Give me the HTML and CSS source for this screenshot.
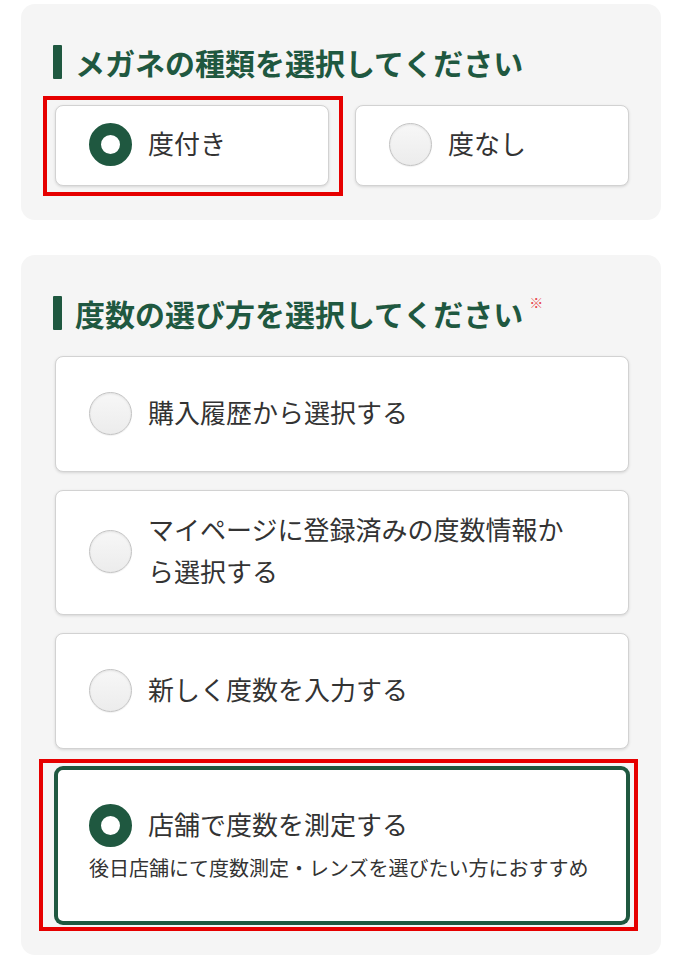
FILE: index.html
```html
<!DOCTYPE html>
<html lang="ja">
<head>
<meta charset="utf-8">
<title>メガネの種類</title>
<link rel="stylesheet" href="styles.css">
</head>
<body>
<main class="page">
  <section class="panel">
    <h2 class="panel-title">メガネの種類を選択してください</h2>
    <div class="choice-grid">
      <label class="choice is-selected is-flagged flag-a">
        <span class="radio"></span>
        <span class="choice-label">度付き</span>
      </label>
      <label class="choice">
        <span class="radio"></span>
        <span class="choice-label">度なし</span>
      </label>
    </div>
  </section>

  <section class="panel panel--list">
    <h2 class="panel-title">度数の選び方を選択してください<span class="required">※</span></h2>
    <div class="choice-list">
      <label class="choice choice--tall">
        <span class="radio"></span>
        <span class="choice-label">購入履歴から選択する</span>
      </label>
      <label class="choice choice--tall">
        <span class="radio"></span>
        <span class="choice-label">マイページに登録済みの度数情報から選択する</span>
      </label>
      <label class="choice choice--tall">
        <span class="radio"></span>
        <span class="choice-label">新しく度数を入力する</span>
      </label>
      <label class="choice choice--stacked is-selected is-active is-flagged flag-b">
        <span class="choice-row">
          <span class="radio"></span>
          <span class="choice-label">店舗で度数を測定する</span>
        </span>
        <span class="choice-note">後日店舗にて度数測定・レンズを選びたい方におすすめ</span>
      </label>
    </div>
  </section>
</main>
</body>
</html>
```
FILE: styles.css
```css
* { box-sizing: border-box; }

body {
  margin: 0;
  background: #ffffff;
  font-family: "Noto Sans CJK JP", "Noto Sans", sans-serif;
  color: #333333;
}

.page {
  padding: 4px 21px 6px 21px;
  display: flex;
  flex-direction: column;
  gap: 35px;
}

.panel {
  background: #f5f5f5;
  border-radius: 14px;
  padding: 41px 32px 34px 34px;
}

.panel--list {
  padding-bottom: 31px;
}

.panel-title {
  margin: 0 0 26px -2px;
  display: flex;
  align-items: center;
  height: 34px;
  font-size: 30px;
  line-height: 34px;
  font-weight: 700;
  letter-spacing: 0;
  color: #1f5840;
}

.panel-title::before {
  content: "";
  flex: 0 0 9px;
  width: 9px;
  height: 34px;
  margin-right: 13px;
  border-radius: 1px;
  background: #1f5840;
}

.required {
  align-self: flex-start;
  margin-left: 6px;
  margin-top: -2px;
  font-size: 14px;
  line-height: 16px;
  font-weight: 400;
  color: #e8474c;
}

.choice-grid {
  display: grid;
  grid-template-columns: 1fr 1fr;
  gap: 26px;
}

.choice-list {
  display: flex;
  flex-direction: column;
  gap: 18px;
}

.choice {
  position: relative;
  display: flex;
  align-items: center;
  gap: 16px;
  min-height: 81px;
  padding: 16px 48px 18px 33px;
  background: #ffffff;
  border: 1px solid #d2d2d2;
  border-radius: 8px;
  box-shadow: 0 1px 3px rgba(0, 0, 0, 0.13);
}

.choice--tall {
  min-height: 116px;
  padding-top: 17px;
  padding-bottom: 19px;
}

.choice-label {
  font-size: 26px;
  line-height: 42px;
  padding-bottom: 3px;
  color: #333333;
}

.radio {
  flex: 0 0 43px;
  width: 43px;
  height: 43px;
  border-radius: 50%;
  background: linear-gradient(#f7f7f7, #ececec);
  border: 1px solid #c3c3c3;
  box-shadow: inset 0 1px 2px rgba(0, 0, 0, 0.08), 0 1px 1px rgba(0, 0, 0, 0.06);
}

.is-selected .radio {
  background: #ffffff;
  border: 12px solid #1f5840;
  box-shadow: none;
}

.choice--stacked {
  flex-direction: column;
  align-items: flex-start;
  justify-content: center;
  gap: 7px;
  min-height: 157px;
  padding: 16px 20px 24px 31px;
}

.is-active {
  border: 3px solid #1f5840;
  box-shadow: 0 0 0 1px #1f5840;
}

.choice-row {
  display: flex;
  align-items: center;
  gap: 16px;
}

.choice-note {
  font-size: 20px;
  line-height: 26px;
  color: #333333;
}

.is-flagged::after {
  content: "";
  position: absolute;
  border: 4px solid #e60000;
  pointer-events: none;
}

.flag-a::after {
  top: -10px;
  left: -13px;
  right: -15px;
  bottom: -11px;
}

.flag-b::after {
  top: -11px;
  left: -19px;
  right: -12px;
  bottom: -10px;
}
```
